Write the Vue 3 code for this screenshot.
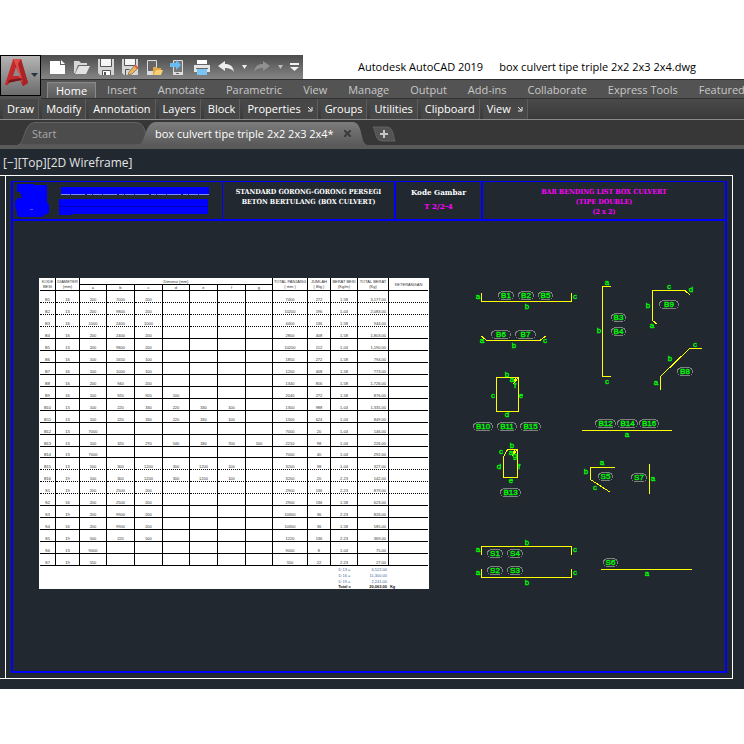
<script setup>
const ribbonTabs = ['Insert', 'Annotate', 'Parametric', 'View', 'Manage', 'Output', 'Add-ins', 'Collaborate', 'Express Tools', 'Featured Apps']

const panels = [
  { name: 'Draw' },
  { name: 'Modify' },
  { name: 'Annotation' },
  { name: 'Layers' },
  { name: 'Block' },
  { name: 'Properties', launcher: true },
  { name: 'Groups' },
  { name: 'Utilities' },
  { name: 'Clipboard' },
  { name: 'View', launcher: true },
]

const columnWidths = [16, 24, 27, 28, 28, 27, 28, 28, 27, 35, 23, 27, 31, 39]
const tableWidth = columnWidths.reduce((sum, w) => sum + w, 0)

// code, diameter, a-g, total length, count, unit weight, total weight
const bars = [
  ['B1', '16', '200', '7000', '200', '', '', '', '', '7400', '272', '1.58', '3,177.00'],
  ['B2', '13', '200', '9800', '200', '', '', '', '', '10200', '196', '1.04', '2,083.00'],
  ['B3', '16', '1000', '2400', '1000', '', '', '', '', '4400', '136', '1.58', '944.00'],
  ['B4', '16', '200', '2400', '200', '', '', '', '', '2800', '408', '1.58', '1,803.00'],
  ['B5', '13', '200', '9800', '200', '', '', '', '', '10200', '112', '1.04', '1,190.00'],
  ['B6', '16', '100', '1650', '100', '', '', '', '', '1850', '272', '1.58', '794.00'],
  ['B7', '16', '100', '1000', '100', '', '', '', '', '1200', '408', '1.58', '773.00'],
  ['B8', '16', '200', '940', '200', '', '', '', '', '1340', '816', '1.58', '1,726.00'],
  ['B9', '16', '100', '920', '920', '100', '', '', '', '2040', '272', '1.58', '876.00'],
  ['B10', '13', '100', '220', '330', '220', '330', '100', '', '1300', '988', '1.04', '1,335.00'],
  ['B11', '13', '100', '220', '330', '220', '330', '100', '', '1300', '624', '1.04', '849.00'],
  ['B12', '13', '7000', '', '', '', '', '', '', '7000', '20', '1.04', '146.00'],
  ['B13', '13', '100', '320', '270', '540', '180', '700', '100', '2210', '98', '1.04', '226.00'],
  ['B14', '13', '7000', '', '', '', '', '', '', '7000', '40', '1.04', '292.00'],
  ['B15', '13', '100', '300', '1200', '300', '1200', '100', '', '3200', '98', '1.04', '327.00'],
  ['B16', '19', '100', '300', '1200', '300', '1200', '100', '', '3200', '20', '2.23', '142.00'],
  ['S1', '19', '200', '2500', '200', '', '', '', '', '2900', '136', '2.23', '879.00'],
  ['S2', '16', '200', '2500', '200', '', '', '', '', '2900', '136', '1.58', '623.00'],
  ['S3', '19', '200', '9900', '200', '', '', '', '', '10300', '36', '2.23', '826.00'],
  ['S4', '16', '200', '9900', '200', '', '', '', '', '10300', '36', '1.58', '585.00'],
  ['S5', '19', '500', '220', '500', '', '', '', '', '1220', '136', '2.23', '369.00'],
  ['S6', '13', '9000', '', '', '', '', '', '', '9000', '8', '1.04', '75.00'],
  ['S7', '19', '550', '', '', '', '', '', '', '550', '22', '2.23', '27.00'],
]
const dottedRows = ['B1', 'B2', 'B3', 'B15', 'B16', 'S1']

const totals = [
  ['D 13 =', '6,522.00'],
  ['D 16 =', '11,300.00'],
  ['D 19 =', '2,241.00'],
]

// Bar outlines in sheet coordinates
const outlines = [
  'M481.5 293V301.5H571.5V293',
  'M481 336L487 340.5H540L546 336',
  'M496.5 377.5H518.5V411.5H496.5ZM518 378L513 384M516 378L514 381',
  'M503.5 477.5V457L507.5 449.5H517.5V477.5ZM517 450L512 456M515 450L513 453',
  'M611 286.5H602.5V376.5H611',
  'M657.5 324.5L652.5 320.5V290.5H685L690.5 295.5',
  'M660.5 389.5V376.5L689.5 348.5H702',
  'M582 430.5H672',
  'M615 467.5H590.5V479.5L610.5 492.5',
  'M649.5 464V494',
  'M481.5 555V546.5H571.5V555',
  'M481.5 569V577.5H571.5V569',
  'M601 569.5H692',
]

const marks = [
  ['B1', 498, 291, 16], ['B2', 518, 291, 16], ['B5', 538, 291, 15],
  ['B6', 491, 330, 20], ['B7', 515, 330, 21],
  ['B10', 473, 422, 20], ['B11', 497, 422, 20], ['B15', 520, 422, 21],
  ['B13', 500, 488, 21],
  ['B3', 611, 313, 15], ['B4', 611, 327, 15],
  ['B9', 659, 300, 20], ['B8', 677, 367, 16],
  ['B12', 595, 419, 21], ['B14', 617, 419, 21], ['B16', 639, 419, 20],
  ['S5', 598, 472, 15], ['S7', 631, 473, 16],
  ['S1', 487, 549, 16], ['S4', 507, 549, 16],
  ['S2', 487, 566, 16], ['S3', 507, 566, 16],
  ['S6', 603, 558, 15],
]

const legs = [
  ['a', 478, 297], ['b', 527, 307], ['c', 575, 297],
  ['a', 482, 341], ['b', 514, 346], ['c', 545, 341],
  ['b', 507, 375], ['a', 512, 380], ['f', 515, 386], ['c', 493, 396], ['e', 521, 396], ['d', 507, 415],
  ['b', 512, 446], ['c', 501, 452], ['a', 511, 453], ['g', 515, 456], ['d', 499, 467], ['f', 519, 467], ['e', 511, 481],
  ['a', 607, 283], ['b', 599, 331], ['c', 607, 382],
  ['a', 652, 326], ['b', 648, 306], ['c', 669, 287], ['d', 691, 290],
  ['a', 656, 383], ['b', 670, 359], ['c', 695, 345],
  ['a', 627, 435],
  ['a', 602, 463], ['b', 586, 472], ['c', 595, 488],
  ['a', 653, 479],
  ['b', 527, 543], ['a', 478, 550], ['c', 575, 550],
  ['a', 478, 573], ['c', 575, 573], ['b', 527, 583],
  ['a', 647, 574],
]
</script>

<template>
  <div class="app">
    <header class="top">
      <button class="app-button" aria-label="Application menu">
        <svg width="38" height="39" viewBox="0 0 38 39">
          <defs>
            <linearGradient id="red" x1="0" y1="0" x2="1" y2="1">
              <stop offset="0" stop-color="#e8403c" />
              <stop offset="1" stop-color="#8e1d20" />
            </linearGradient>
          </defs>
          <path d="M12 3h8l7 24-5 3-3-6-11 1-2 4H4z" fill="url(#red)" />
          <path d="M13 3l3 5-4 13 7-1 1 4-11 1-2 4H4z" fill="#c3282b" />
          <path d="M12 3h8l7 24-5 3z" fill="#a92326" />
          <path d="M12 3h8l-3 5 5 19-3-3-4-14z" fill="#de4d48" />
          <path d="M15 11l4 9h-7z" fill="#8b8b8b" />
          <path d="M8 24l12-2 1 2-14 3z" fill="#7b171a" />
          <path d="M30 17h7l-3.500 4z" fill="#26323c" />
        </svg>
      </button>

      <div class="title-row">
        <div class="qat">
          <button class="tool" aria-label="New">
            <svg width="18" height="16" viewBox="0 0 18 16"><path d="M1 2h10v4h5v9H1z" fill="#fff" /><path d="M12 1l4 4h-4z" fill="#fff" /></svg>
          </button>
          <button class="tool" aria-label="Open">
            <svg width="18" height="16" viewBox="0 0 18 16"><path d="M1 2h5l2 2h6v2H5L2 14H1z" fill="#d8d8d8" /><path d="M6 7h11l-4 8H2z" fill="#e2e2e2" /></svg>
          </button>
          <button class="tool" aria-label="Save">
            <svg width="18" height="16" viewBox="0 0 18 16"><path d="M1 0h16v16H3l-2-2z" fill="#d6d6d6" /><path d="M4 0h10v7H4z" fill="#f5f5f5" /><path d="M3.500 0v7.500h11V0M5.500 16v-4.500h8V16" fill="none" stroke="#555" /><path d="M6 12h7v4H6z" fill="#fff" /><path d="M7 13h2v3H7z" fill="#555" /></svg>
          </button>
          <button class="tool" aria-label="Save As">
            <svg width="18" height="16" viewBox="0 0 18 16"><path d="M1 0h16v16H3l-2-2z" fill="#d6d6d6" /><path d="M4 0h10v6H4z" fill="#f5f5f5" /><path d="M3.500 0v6.500h11V0M4.500 16v-5.500h4" fill="none" stroke="#555" /><path d="M8 13l6-7 3 3-6 6-4 1z" fill="#f0b254" stroke="#555" stroke-width=".6" /><path d="M13 7l1-2 3 3-1 2z" fill="#d45f50" /></svg>
          </button>
          <button class="tool" aria-label="Open from Web and Mobile">
            <svg width="18" height="17" viewBox="0 0 18 17"><path d="M2.500 1.500h9v14h-9z" fill="#666" stroke="#ddd" /><path d="M2 12h10v4H2z" fill="#ddd" /><path d="M8 8h3l1 1h4v2h-5l-2 5H8z" fill="#e5a742" /><path d="M11 11h7l-2 5H9z" fill="#f9cf73" /></svg>
          </button>
          <button class="tool" aria-label="Save to Web and Mobile">
            <svg width="18" height="17" viewBox="0 0 18 17"><path d="M4.500 1.500h9v14h-9z" fill="#777" stroke="#ddd" /><path d="M4 13h10v3H4z" fill="#ddd" /><path d="M7 14h3v1H7z" fill="#666" /><path d="M1 4h6V1l5 5-5 5V8H1z" fill="#64bdf5" /></svg>
          </button>
          <button class="tool" aria-label="Plot">
            <svg width="18" height="17" viewBox="0 0 18 17"><path d="M4 1h10v4H4z" fill="#fff" /><path d="M1 6h16v7H1z" fill="#e4e4e4" /><path d="M1 5h16v1H1zM3 9h12v1H3z" fill="#666" /><path d="M4 10h10v6H4z" fill="#7ac4f4" /></svg>
          </button>
          <button class="tool" aria-label="Undo">
            <svg width="18" height="12" viewBox="0 0 18 12"><path d="M1 5l7-5v3c5 0 8 2 9 8-2-3-5-4-9-4v3z" fill="#ececec" /></svg>
          </button>
          <button class="tool caret" aria-label="Undo list">
            <svg width="5" height="4" viewBox="0 0 5 4"><path d="M0 0h5L2.500 4z" fill="#eee" /></svg>
          </button>
          <button class="tool" aria-label="Redo">
            <svg width="18" height="12" viewBox="0 0 18 12"><path d="M17 5l-7-5v3c-5 0-8 2-9 8 2-3 5-4 9-4v3z" fill="#909090" /></svg>
          </button>
          <button class="tool caret" aria-label="Redo list">
            <svg width="5" height="4" viewBox="0 0 5 4"><path d="M0 0h5L2.500 4z" fill="#bbb" /></svg>
          </button>
          <button class="tool more" aria-label="Customize Quick Access Toolbar">
            <svg width="9" height="8" viewBox="0 0 9 8"><path d="M0 0h9v2H0zM0 4h9L4.500 8z" fill="#f2f2f2" /></svg>
          </button>
        </div>
        <h1 class="title"><span>Autodesk AutoCAD 2019</span><span>box culvert tipe triple 2x2 2x3 2x4.dwg</span></h1>
      </div>

      <nav class="ribbon-tabs">
        <button class="ribbon-tab current">Home</button>
        <button v-for="tab in ribbonTabs" :key="tab" class="ribbon-tab">{{ tab }}</button>
      </nav>
    </header>

    <div class="panels">
      <button v-for="(panel, i) in panels" :key="i" class="panel">
        {{ panel.name }}
        <svg v-if="panel.launcher" width="6" height="6" viewBox="0 0 6 6"><path d="M1 1l3 3M5 1v4H1" fill="none" stroke="#eee" /></svg>
      </button>
    </div>

    <nav class="documents">
      <button class="doc start">
        <svg class="shape" viewBox="0 0 130 23" preserveAspectRatio="none"><path d="M0 23C7 22 5 1 17 .5H118C127 1 127 10 130 23z" fill="#4c4c4c" stroke="#626262" /></svg>
        <span>Start</span>
      </button>
      <button class="doc active">
        <svg class="shape" viewBox="0 0 228 23" preserveAspectRatio="none">
          <defs>
            <linearGradient id="tab" x1="0" y1="0" x2="0" y2="1">
              <stop offset="0" stop-color="#7c7c7c" />
              <stop offset="1" stop-color="#5a5a5a" />
            </linearGradient>
          </defs>
          <path d="M0 23C8 22 6 0 18 0H213C224 0 220 22 228 23z" fill="url(#tab)" />
        </svg>
        <span>box culvert tipe triple 2x2 2x3 2x4*</span>
        <svg class="close" width="7" height="7" viewBox="0 0 7 7"><path d="M0 0l7 7M7 0L0 7" stroke="#3c3c3c" stroke-width="2" /></svg>
      </button>
      <button class="doc add" aria-label="New drawing">
        <svg width="24" height="16" viewBox="0 0 24 16"><path d="M1 1h14c6 0 6 8 8 14H10C3 15 4 5 1 1z" fill="#545454" stroke="#626262" /><path d="M8 8h8M12 4v8" stroke="#c6c6c6" stroke-width="2" /></svg>
      </button>
    </nav>

    <main class="canvas">
      <p class="viewport">[−][Top][2D Wireframe]</p>
      <div class="sheet">
        <div class="margin">
          <div class="frame">
            <div class="title-block">
              <div class="owner">
                <svg viewBox="0 0 209 37" width="209" height="37" shape-rendering="crispEdges">
                  <path d="M4 2h16l1 1h13v17l2 3v8l-3 1-4 3H6l-2-1v-4l-2-4v-6l2-3V16h5l-2-6H4z" fill="#00f" />
                  <path d="M48 5h148v7H48zM46 17h149v7H46zM46 25h149v7H70l-22 1h-2z" fill="#00f" />
                  <path d="M46 24.500h149" stroke="#0000c0" />
                  <path d="M48 12.500h148" stroke="#7d8cff" stroke-dasharray="9 1 14 2 5 1" />
                  <path d="M17 27.500h3" stroke="#55f" />
                </svg>
              </div>
              <div class="block subject"><span>STANDARD GORONG-GORONG PERSEGI</span><span>BETON BERTULANG (BOX CULVERT)</span></div>
              <div class="block code"><span class="large">Kode Gambar</span><span class="large magenta">T 2/2-4</span></div>
              <div class="block drawing-name magenta"><span>BAR BENDING LIST BOX CULVERT</span><span>(TIPE DOUBLE)</span><span>(2 x 2)</span></div>
            </div>

            <div class="body">
              <div class="schedule">
                <table>
                  <colgroup>
                    <col v-for="(w, i) in columnWidths" :key="i" :style="{ width: (w / tableWidth) * 100 + '%' }" />
                  </colgroup>
                  <thead>
                    <tr class="upper">
                      <th rowspan="2">KODE<br />BESI</th>
                      <th rowspan="2">DIAMETER<br />(mm)</th>
                      <th colspan="7">Dimensi (mm)</th>
                      <th rowspan="2">TOTAL PANJANG<br />( mm )</th>
                      <th rowspan="2">JUMLAH<br />( Btg )</th>
                      <th rowspan="2">BERAT BESI<br />(Kg/m)</th>
                      <th rowspan="2">TOTAL BERAT<br />(Kg)</th>
                      <th rowspan="2">KETERANGAN</th>
                    </tr>
                    <tr class="lower">
                      <th v-for="leg in 'abcdefg'" :key="leg">{{ leg }}</th>
                    </tr>
                  </thead>
                  <tbody>
                    <tr v-for="bar in bars" :key="bar[0]" :class="{ dotted: dottedRows.includes(bar[0]), short: bar[0] === 'B14' }">
                      <td v-for="(cell, i) in bar" :key="i" :class="{ weight: i === 12 }">{{ cell }}</td>
                      <td></td>
                    </tr>
                  </tbody>
                  <tfoot>
                    <tr v-for="total in totals" :key="total[0]">
                      <td colspan="11"></td>
                      <td>{{ total[0] }}</td>
                      <td class="weight">{{ total[1] }}</td>
                      <td></td>
                    </tr>
                    <tr class="grand">
                      <td colspan="11"></td>
                      <td>Total =</td>
                      <td class="weight">20,063.00</td>
                      <td class="unit">Kg</td>
                    </tr>
                  </tfoot>
                </table>
              </div>

              <svg class="details" viewBox="429 221 296 450">
                <path v-for="d in outlines" :key="d" class="bar" :d="d" />
                <g v-for="[name, x, y, w] in marks" :key="name">
                  <rect class="mark" :x="x + 0.5" :y="y + 0.5" :width="w - 1" height="8" rx="4" />
                  <text :x="x + w / 2" :y="y + 7">{{ name }}</text>
                </g>
                <text v-for="([name, x, y], i) in legs" :key="i" :x="x" :y="y + 2">{{ name }}</text>
              </svg>
            </div>
          </div>
        </div>
      </div>
    </main>
  </div>
</template>

<style>
body {
  margin: 0;
  background: #fff;
}
</style>

<style scoped>
.app {
  padding-top: 55px;
  overflow: hidden;
  font-family: "Open Sans", "Noto Sans", sans-serif;
  font-size: 11px;
  line-height: 16px;
}
button {
  margin: 0;
  padding: 0;
  border: 0;
  background: none;
  color: inherit;
  font: inherit;
  white-space: nowrap;
}
svg {
  display: block;
}
.top {
  display: grid;
  grid-template-columns: 41px minmax(0, 1fr);
  grid-template-rows: 24px 20px;
  background: #535353;
}
.app-button {
  grid-row: 1 / 3;
  align-self: start;
  height: 41px;
  border: 1px solid #000;
  background: linear-gradient(#b4b4b4, #6c6c6c);
}
.title-row {
  display: flex;
  background: #fff;
}
.qat {
  display: flex;
  align-items: center;
  padding: 0 1px 0 5px;
  background: linear-gradient(#4c4c4c, #858585);
}
.tool {
  display: flex;
  justify-content: center;
  width: 24px;
}
.tool.caret {
  width: 12px;
}
.tool.more {
  width: 16px;
}
.title {
  display: flex;
  gap: 16px;
  margin: 0 0 0 55px;
  color: #000;
  font-size: 11px;
  font-weight: 400;
  line-height: 24px;
  white-space: nowrap;
}
.ribbon-tabs {
  display: flex;
  gap: 1px;
  padding-left: 6px;
  overflow: hidden;
  border-top: 1px solid #2f2f2f;
  border-bottom: 1px solid #333;
  color: #c8c8c8;
  line-height: 20px;
}
.ribbon-tab {
  flex: none;
  height: 18px;
  padding: 0 10px;
}
.ribbon-tab.current {
  box-sizing: border-box;
  height: 16px;
  margin-top: 2px;
  padding: 0 8px;
  border: 1px solid #8a8a8a;
  border-bottom: 0;
  background: linear-gradient(#747474, #5c5c5c);
  color: #fff;
  line-height: 14px;
}
.panels {
  display: flex;
  gap: 3px;
  height: 21px;
  box-sizing: border-box;
  padding-left: 3px;
  border-bottom: 1px solid #8a8a8a;
  background: linear-gradient(#4a4a4a, #3a3a3a);
  color: #fff;
}
.panel {
  display: flex;
  align-items: center;
  gap: 6px;
  padding: 0 4px;
  border-right: 1px solid #5c5c5c;
  background: #474747;
}
.documents {
  display: flex;
  align-items: flex-end;
  height: 29px;
  box-sizing: border-box;
  padding: 0 0 0 18px;
  border-bottom: 4px solid #5a5a5a;
  background: #373737;
}
.doc {
  position: relative;
  display: flex;
  align-items: center;
  height: 23px;
}
.doc span,
.doc .close {
  position: relative;
}
.doc .shape {
  position: absolute;
  top: 0;
  left: 0;
  width: 100%;
  height: 100%;
}
.doc.start {
  width: 130px;
  padding-left: 14px;
  color: #a8a8a8;
}
.doc.active {
  gap: 10px;
  margin-left: -10px;
  padding: 0 17px;
  color: #fff;
}
.doc.add {
  margin-left: 4px;
}
.canvas {
  padding-bottom: 10px;
  background: #212830;
}
.viewport {
  margin: 0;
  padding: 2px 3px 0;
  color: #e4e4e4;
  font-size: 12px;
  line-height: 24px;
}
.sheet {
  margin-right: 11px;
  padding-left: 5px;
  border: 1px solid #fff;
  border-left: 0;
}
.margin {
  padding: 5px;
  border-left: 1px solid #fff;
}
.frame {
  border: 2px solid #00f;
  border-top-width: 1px;
}
.title-block {
  display: grid;
  grid-template-columns: 210fr 173fr 87fr 242fr;
  height: 37px;
  border-bottom: 2px solid #00f;
  color: #fff;
  font-family: "DejaVu Serif Condensed", "DejaVu Serif", serif;
  font-size: 7px;
  font-weight: 700;
  line-height: 10px;
  white-space: nowrap;
}
.owner {
  overflow: hidden;
  border-right: 1px solid #00f;
}
.block {
  display: flex;
  flex-direction: column;
  align-items: center;
  padding-top: 5px;
}
.subject,
.code {
  border-right: 2px solid #00f;
}
.code {
  gap: 4px;
}
.large {
  font-size: 8px;
}
.magenta {
  color: #f0f;
}
.body {
  display: grid;
  grid-template-columns: 390fr 296fr;
  align-items: start;
  padding-left: 26px;
}
.schedule {
  margin-top: 57px;
  padding: 0 1px;
  background: #fff;
}
table {
  width: 100%;
  table-layout: fixed;
  border-collapse: separate;
  border-spacing: 0;
  color: #333;
  font-family: "Liberation Sans", Arial, sans-serif;
  font-size: 4px;
  line-height: 5px;
  text-align: center;
  white-space: nowrap;
}
th,
td {
  box-sizing: border-box;
  padding: 0;
  border-right: 1px solid #000;
  border-bottom: 1px solid #000;
  font-weight: 400;
}
.upper {
  height: 7px;
}
.lower {
  height: 6px;
}
tbody tr {
  height: 12px;
}
tbody tr.short {
  height: 11px;
}
tbody td {
  vertical-align: bottom;
}
tbody .dotted td {
  border-bottom-style: dotted;
}
tbody td:last-child,
.upper th:last-child {
  border-right: 0;
}
.weight {
  padding-right: 2px;
  text-align: right;
}
tfoot tr {
  height: 6px;
  color: #47699c;
}
tfoot td {
  border: 0;
}
tfoot .grand {
  height: 5px;
  color: #111;
}
tfoot .grand td {
  font-weight: 700;
}
.unit {
  padding-left: 1px;
  text-align: left;
}
.details {
  width: 100%;
  font-family: "Liberation Sans", Arial, sans-serif;
  font-size: 8px;
}
.details text {
  fill: #0f0;
  stroke: #0f0;
  stroke-width: 0.3px;
  text-anchor: middle;
}
.bar {
  fill: none;
  stroke: #ff0;
  shape-rendering: crispEdges;
}
.mark {
  fill: none;
  stroke: #808080;
  shape-rendering: crispEdges;
}
</style>
